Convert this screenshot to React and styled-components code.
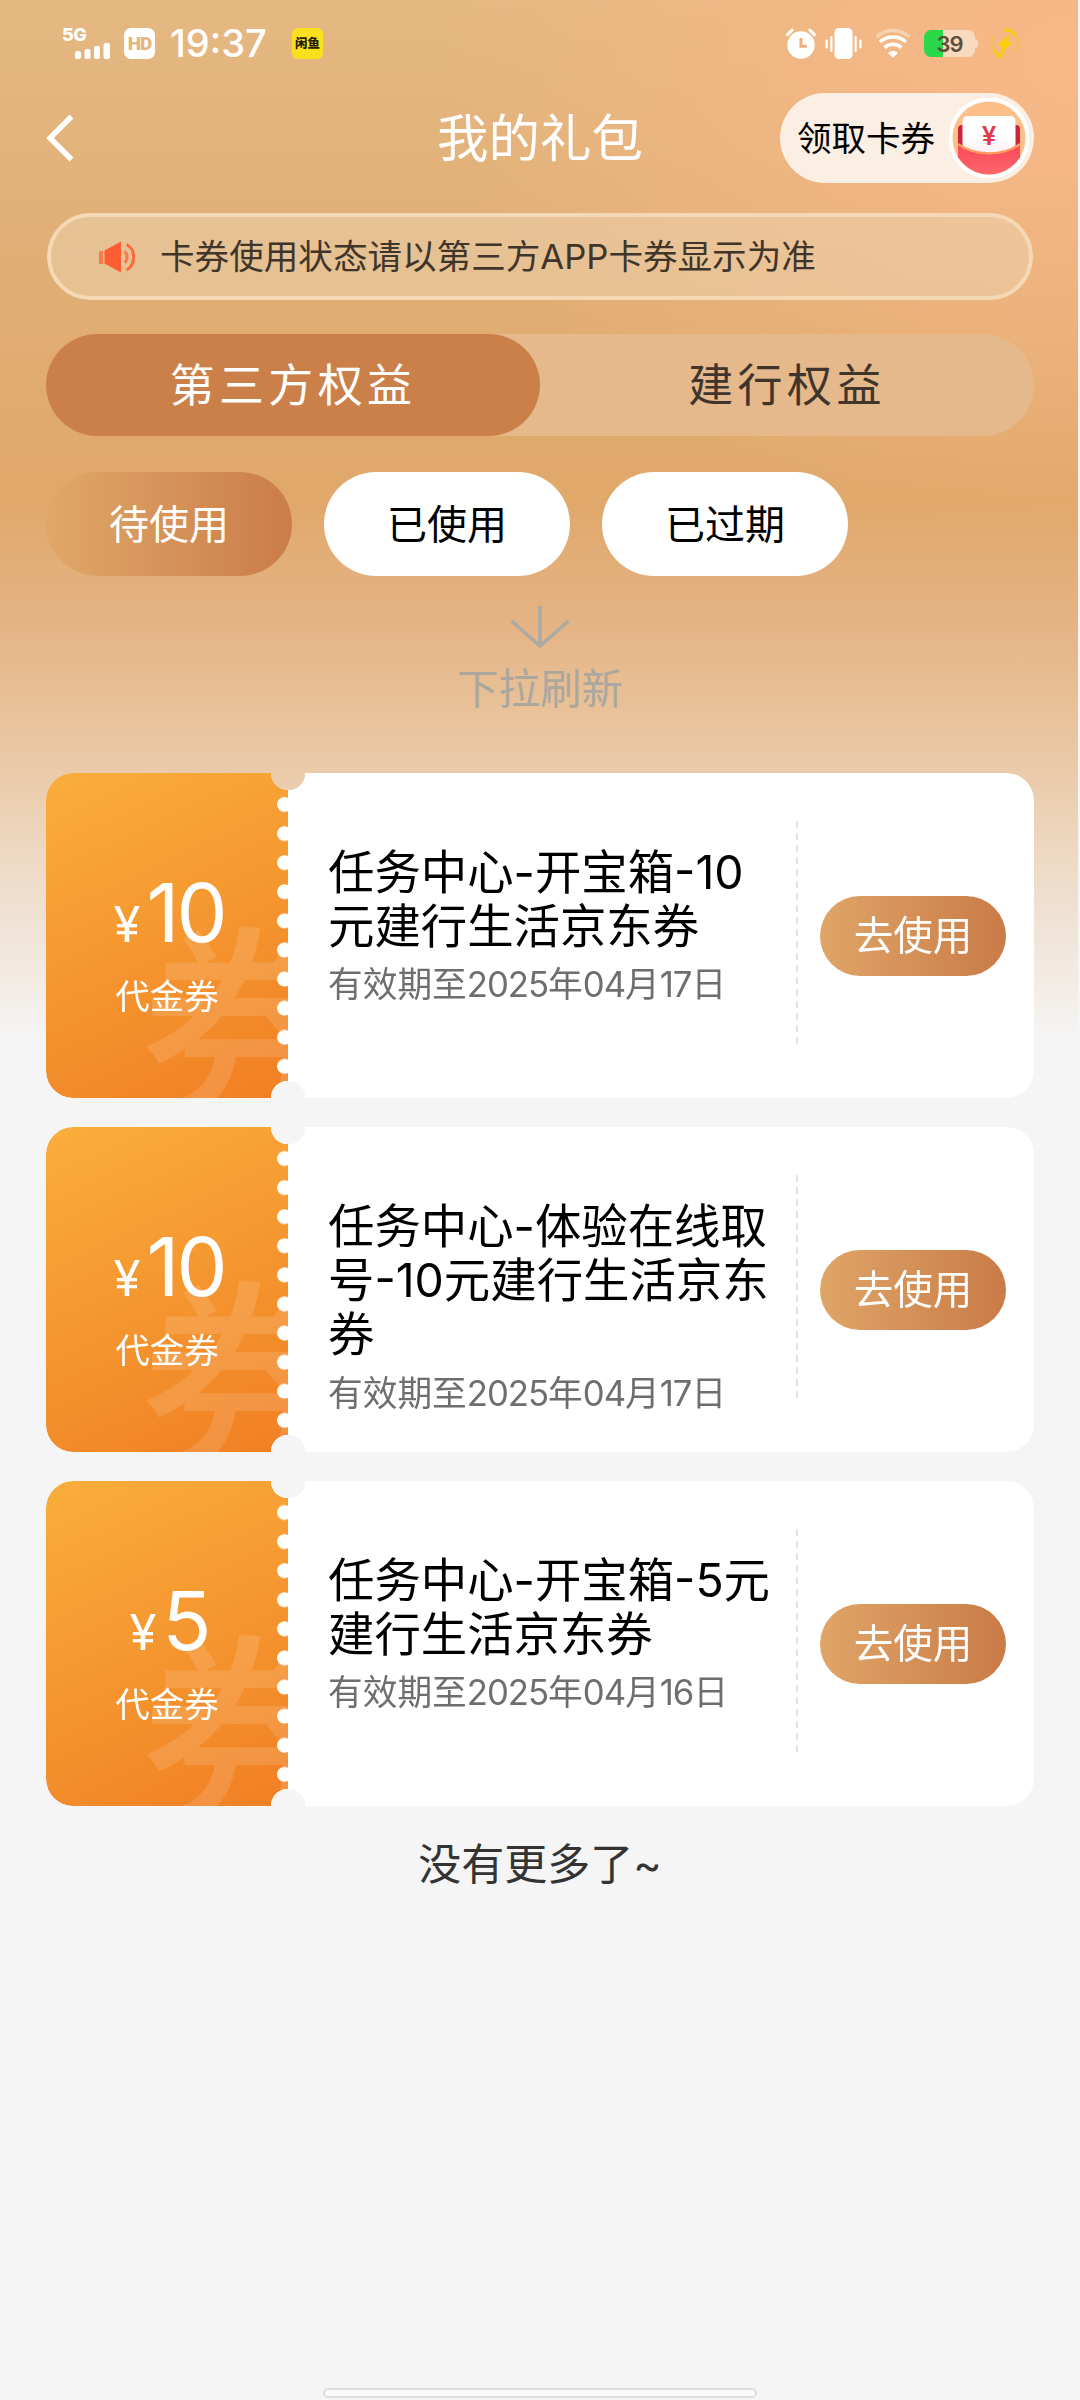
import React, { useState } from 'react';
import styled, { createGlobalStyle } from 'styled-components';

const coupons = [
    { id: 1, amount: 10, title: '任务中心-开宝箱-10元建行生活京东券', date: ['2025', '04', '17'] },
    { id: 2, amount: 10, title: '任务中心-体验在线取号-10元建行生活京东券', date: ['2025', '04', '17'] },
    { id: 3, amount: 5, title: '任务中心-开宝箱-5元建行生活京东券', date: ['2025', '04', '16'] },
];

const tabs = ['第三方权益', '建行权益'];
const filters = ['待使用', '已使用', '已过期'];

const SignalIcon = () => (
    <svg width="35" height="16" viewBox="0 0 35 16" fill="#fff">
        <rect x="0" y="8" width="6" height="8" rx="2" />
        <rect x="9.5" y="6" width="6" height="10" rx="2" />
        <rect x="19" y="3" width="6" height="13" rx="2" />
        <rect x="28.5" y="0" width="6.5" height="16" rx="2" />
    </svg>
);

const AlarmIcon = () => (
    <svg width="30" height="31" viewBox="0 0 30 31" fill="none">
        <circle cx="15" cy="17" r="13.7" fill="#fff" />
        <path d="M1.6 6.6L6.2 2M28.4 6.6L23.8 2" stroke="#fff" strokeWidth="3" strokeLinecap="round" />
        <path d="M15 10v8.3h6" stroke="#ecb07a" strokeWidth="3" />
    </svg>
);

const VibrateIcon = () => (
    <svg width="37" height="31" viewBox="0 0 37 31" fill="#fff">
        <rect x="9.5" y="0" width="18" height="31" rx="4.5" />
        <rect x="5.3" y="8" width="2.2" height="16" rx="1" />
        <rect x="0.4" y="11.5" width="2.4" height="9" rx="1.2" />
        <rect x="29.5" y="8" width="2.2" height="16" rx="1" />
        <rect x="34.2" y="11.5" width="2.4" height="9" rx="1.2" />
    </svg>
);

const WifiIcon = () => (
    <svg width="36" height="30" viewBox="0 0 36 30" fill="none" strokeWidth="3.6">
        <path d="M1.5 9C11 0.2 25 0.2 34.5 9" stroke="rgba(255,255,255,.35)" />
        <path d="M5 14c7.4 -6.6 18.6 -6.6 26 0" stroke="#fff" />
        <path d="M9.5 19.6c5 -4.4 12 -4.4 17 0" stroke="#fff" />
        <path d="M13 25c3 -2.6 7 -2.6 10 0L18 29.8z" fill="#fff" />
    </svg>
);

const ChargeIcon = () => (
    <svg width="30" height="31" viewBox="0 0 30 31" fill="none">
        <path d="M6 24A13 13 0 0 1 4 8" stroke="#f3bf3d" strokeWidth="3" opacity=".6" />
        <path d="M25 7a13 13 0 0 1 0 17" stroke="#f3bf3d" strokeWidth="3" opacity=".6" />
        <path d="M14 2.5c4 -1.5 9 .5 11.5 5M4 22l6 7 4-5" stroke="#f8cb14" strokeWidth="3.4" />
        <path d="M18.5 8L8.500 17h4.500L11.500 24 21.500 14.500h-4.500z" fill="#fbd00b" stroke="#fbd00b" strokeWidth="1.500" strokeLinejoin="round" />
    </svg>
);

const BackIcon = () => (
    <svg width="28" height="48" viewBox="0 0 28 48" fill="none">
        <path d="M25.5 2.5L4 24l21.5 21.5" stroke="#fff" strokeWidth="5.4" />
    </svg>
);

const PacketIcon = () => (
    <svg width="80" height="80" viewBox="0 0 80 80">
        <defs>
            <linearGradient id="packet" x1="0" y1="0" x2="0" y2="1">
                <stop offset="0" stopColor="#f9475a" />
                <stop offset="1" stopColor="#ff6a6c" />
            </linearGradient>
            <linearGradient id="paper" x1="0" y1="0" x2="0" y2="1">
                <stop offset="0.5" stopColor="#fff" />
                <stop offset="1" stopColor="#fde9f0" />
            </linearGradient>
            <clipPath id="disc"><circle cx="40" cy="40" r="36.5" /></clipPath>
        </defs>
        <circle cx="40" cy="40" r="38.5" fill="#fdc08a" stroke="#fff" strokeWidth="4" />
        <g clipPath="url(#disc)">
            <rect x="9" y="27" width="62" height="30" rx="4" fill="#cf2438" />
            <rect x="13.5" y="18" width="53" height="42" rx="5" fill="url(#paper)" />
            <path d="M9 46C26 58.5 54 58.5 71 46V80H9z" fill="url(#packet)" />
            <path d="M9 46C26 58.5 54 58.5 71 46" fill="none" stroke="#ff9a5c" strokeWidth="2.2" />
        </g>
        <text x="40" y="46.5" textAnchor="middle" fontSize="26" fontWeight="600" fontFamily="Inter, sans-serif" fill="#e23a4b">¥</text>
    </svg>
);

const SpeakerIcon = () => (
    <svg width="37" height="32" viewBox="0 0 37 32" fill="none">
        <path d="M0 10h4v13H0z" fill="#fb7a4d" />
        <path d="M5.5 9.5L22 .5v31L5.5 22.5z" fill="#fd5d33" />
        <path d="M25.5 10.5c3.4 2.5 3.4 8.5 0 11" stroke="#fb7a4d" strokeWidth="3" />
        <path d="M27.5 3.5c9.5 4.5 9.5 20.5 0 25.5" stroke="#fd6a3d" strokeWidth="3" />
    </svg>
);

const DownArrow = () => (
    <svg width="60" height="43" viewBox="0 0 60 43" fill="none" stroke="#aeaaa3" strokeWidth="3.6">
        <path d="M30 0v40M1.5 15L30 40 58.5 15" />
    </svg>
);

const App = () => {
    const [tab, setTab] = useState(0);
    const [filter, setFilter] = useState(0);

    return (
        <Page>
            <GlobalStyle />
            <StatusBar>
                <Network>
                    <NetworkType>5G</NetworkType>
                    <SignalIcon />
                </Network>
                <HdBadge>HD</HdBadge>
                <Clock>19:37</Clock>
                <AppBadge>闲鱼</AppBadge>
                <StatusRight>
                    <AlarmIcon />
                    <VibrateIcon />
                    <WifiIcon />
                    <Battery><BatteryLevel>39</BatteryLevel></Battery>
                    <ChargeIcon />
                </StatusRight>
            </StatusBar>

            <Header>
                <BackButton><BackIcon /></BackButton>
                <HeaderTitle>我的礼包</HeaderTitle>
                <ClaimButton>
                    <ClaimText>领取卡券</ClaimText>
                    <PacketIcon />
                </ClaimButton>
            </Header>

            <Notice>
                <SpeakerIcon />
                <NoticeText>卡券使用状态请以第三方APP卡券显示为准</NoticeText>
            </Notice>

            <Tabs>
                {tabs.map((name, i) => (
                    <Tab key={name} $active={tab === i} onClick={() => setTab(i)}>{name}</Tab>
                ))}
            </Tabs>

            <Filters>
                {filters.map((name, i) => (
                    <Filter key={name} $active={filter === i} onClick={() => setFilter(i)}>{name}</Filter>
                ))}
            </Filters>

            <PullRefresh>
                <DownArrow />
                <PullText>下拉刷新</PullText>
            </PullRefresh>

            <CouponList>
                {coupons.map(({ id, amount, title, date }) => (
                    <Coupon key={id}>
                        <CouponValue>
                            <Watermark>券</Watermark>
                            <Amount><Currency>¥</Currency>{amount}</Amount>
                            <CouponType>代金券</CouponType>
                        </CouponValue>
                        <CouponInfo>
                            <CouponTitle>{title}</CouponTitle>
                            <CouponDate>
                                有效期至<Num>{date[0]}</Num>年<Num>{date[1]}</Num>月<Num>{date[2]}</Num>日
                            </CouponDate>
                        </CouponInfo>
                        <CouponAction>
                            <UseButton>去使用</UseButton>
                        </CouponAction>
                    </Coupon>
                ))}
            </CouponList>

            <NoMore>没有更多了~</NoMore>
            <HomeBar />
        </Page>
    );
};

export default App;

const GlobalStyle = createGlobalStyle`
    * {
        box-sizing: border-box;
    }

    body {
        margin: 0;
        background-color: #f5f5f5;
        font-family: Inter, "Noto Sans CJK SC", sans-serif;
    }

    svg {
        display: block;
        flex-shrink: 0;
    }

    button {
        border: none;
        padding: 0;
        font-family: inherit;
        cursor: pointer;
    }
`;

const Page = styled.div`
    width: 1080px;
    height: 2400px;
    display: flex;
    flex-direction: column;
    overflow: hidden;
    background:
        radial-gradient(ellipse 640px 480px at 1080px 60px, #f9b888 0%, rgba(249, 184, 136, .65) 35%, rgba(249, 184, 136, 0) 100%),
        linear-gradient(to bottom, #e5b882 0, #e1b078 220px, #e0a869 500px, #e2ae78 560px, #e4b384 620px, #e8c096 700px, #eacbaa 775px, #eed8c2 850px, #f0e2d5 920px, #f3ece5 985px, #f5f5f5 1040px);
    background-size: 1078px 100%;
    background-repeat: no-repeat;
`;

const StatusBar = styled.div`
    height: 88px;
    padding: 0 60px 2px 62px;
    display: flex;
    align-items: center;
    color: white;
`;

const Network = styled.div`
    width: 48px;
    height: 31px;
    display: flex;
    flex-direction: column;
    align-items: flex-end;
    justify-content: space-between;
`;

const NetworkType = styled.span`
    align-self: flex-start;
    height: 14px;
    font-size: 18px;
    font-weight: 800;
    line-height: 14px;
    letter-spacing: -0.5px;
`;

const HdBadge = styled.span`
    width: 31px;
    height: 31px;
    margin-left: 14px;
    border-radius: 7px;
    background-color: white;
    color: #e4b680;
    font-family: Roboto, sans-serif;
    font-size: 19px;
    font-weight: 900;
    line-height: 32px;
    text-align: center;
    letter-spacing: -1px;
`;

const Clock = styled.span`
    width: 104px;
    margin-left: 15px;
    font-size: 38px;
    font-weight: 500;
    white-space: nowrap;
`;

const AppBadge = styled.span`
    width: 31px;
    height: 31px;
    margin-left: 18px;
    border-radius: 6px;
    background-color: #fbe11d;
    color: #26220a;
    font-size: 12.5px;
    font-weight: 900;
    line-height: 31px;
    text-align: center;
`;

const StatusRight = styled.div`
    margin-left: auto;
    display: flex;
    align-items: center;
    gap: 13px;

    & > svg:first-child {
        margin-right: -4px;
    }
`;

const Battery = styled.div`
    position: relative;
    width: 51px;
    height: 27px;
    margin-right: 2px;
    border-radius: 7px;
    background: linear-gradient(to right, #2bd84a 19px, #f8dac0 19px);

    &::after {
        content: '';
        position: absolute;
        right: -3px;
        top: 9px;
        width: 3px;
        height: 9px;
        border-radius: 0 3px 3px 0;
        background-color: #f8dac0;
    }
`;

const BatteryLevel = styled.span`
    display: block;
    color: #5d4c38;
    font-size: 22px;
    font-weight: 600;
    line-height: 28px;
    text-align: center;
    letter-spacing: -1px;
`;

const Header = styled.div`
    height: 100px;
    padding: 0 46px;
    display: grid;
    grid-template-columns: 1fr auto 1fr;
    align-items: center;
`;

const BackButton = styled.button`
    justify-self: start;
    background: none;
`;

const HeaderTitle = styled.h1`
    margin: 0;
    color: white;
    font-size: 51.5px;
    font-weight: 400;
    line-height: 64px;
`;

const ClaimButton = styled.button`
    justify-self: end;
    width: 254px;
    height: 90px;
    padding: 0 5px 0 17px;
    display: flex;
    align-items: center;
    justify-content: space-between;
    border-radius: 45px;
    background-color: #fbefe4;
    color: black;
`;

const ClaimText = styled.span`
    padding-bottom: 4px;
    font-size: 34.5px;
`;

const Notice = styled.div`
    height: 87px;
    margin: 25px 47px 0;
    padding: 0 48px;
    display: flex;
    align-items: center;
    gap: 24px;
    border: 4px solid #f5d8b5;
    border-radius: 44px;
    background-color: rgba(236, 212, 176, .5);
`;

const NoticeText = styled.span`
    padding-bottom: 5px;
    color: #40352a;
    font-size: 34.6px;
    white-space: nowrap;
`;

const Tabs = styled.div`
    height: 102px;
    margin: 34px 46px 0;
    display: flex;
    border-radius: 51px;
    background-color: #e5b98b;
`;

const Tab = styled.button`
    flex: 1;
    padding-bottom: 6px;
    border-radius: 51px;
    background-color: ${(props) => (props.$active ? '#cc8049' : 'transparent')};
    color: ${(props) => (props.$active ? 'white' : '#40352c')};
    font-size: 45px;
    letter-spacing: 4.4px;
`;

const Filters = styled.div`
    margin: 36px 46px 0;
    display: flex;
    gap: 32px;
`;

const Filter = styled.button`
    width: 246px;
    height: 104px;
    padding-bottom: 5px;
    border-radius: 52px;
    background: ${(props) => (props.$active ? 'linear-gradient(to right, #e0a868, #cb7c49)' : 'white')};
    color: ${(props) => (props.$active ? 'white' : 'black')};
    font-size: 40px;
`;

const PullRefresh = styled.div`
    margin-top: 30px;
    display: flex;
    flex-direction: column;
    align-items: center;
    gap: 19px;
`;

const PullText = styled.span`
    color: #aba79f;
    font-size: 41.5px;
    line-height: 42px;
`;

const CouponList = styled.div`
    margin: 63px 46px 0;
    display: flex;
    flex-direction: column;
    gap: 29px;
`;

const Coupon = styled.div`
    height: 325px;
    display: flex;
    border-radius: 27px;
    overflow: hidden;
    background-color: white;
    mask:
        radial-gradient(circle at 242px 0, transparent 17px, #000 17.5px),
        radial-gradient(circle at 242px 100%, transparent 17px, #000 17.5px);
    mask-composite: intersect;
`;

const CouponValue = styled.div`
    position: relative;
    width: 242px;
    padding-top: 98px;
    display: flex;
    flex-direction: column;
    align-items: center;
    overflow: hidden;
    background: linear-gradient(155deg, #f9ae3b, #f17f24);
    color: white;

    /* perforated edge */
    &::after {
        content: '';
        position: absolute;
        top: 17px;
        right: 0;
        width: 11px;
        height: 291px;
        background: radial-gradient(circle at 7.5px 14.5px, white 7px, transparent 7.8px) 0 0 / 11px 29.1px repeat-y;
    }
`;

const Watermark = styled.span`
    position: absolute;
    left: 94px;
    top: 151px;
    color: rgba(255, 255, 255, .13);
    font-size: 210px;
    font-weight: 500;
    line-height: 1;
`;

const Amount = styled.div`
    position: relative;
    height: 84px;
    padding-left: 4px;
    font-size: 81px;
    line-height: 84px;
    letter-spacing: -3px;
`;

const Currency = styled.span`
    margin-right: 9px;
    font-size: 49px;
`;

const CouponType = styled.span`
    position: relative;
    margin-top: 21px;
    font-size: 34.5px;
    line-height: 42px;
`;

const CouponInfo = styled.div`
    width: 496px;
    padding: 72px 0 0 40px;
`;

const CouponTitle = styled.div`
    color: black;
    font-size: 46.4px;
    line-height: 54.2px;
    word-break: break-all;
`;

const CouponDate = styled.div`
    margin-top: 6px;
    color: #6e6e6e;
    font-size: 34.7px;
    line-height: 50px;
    white-space: nowrap;
`;

const Num = styled.span`
    letter-spacing: -1px;
`;

const CouponAction = styled.div`
    flex: 1;
    margin-left: 12px;
    padding-right: 28px;
    display: flex;
    align-items: center;
    justify-content: flex-end;
    background: repeating-linear-gradient(to bottom, #e2e2e2 0, #e2e2e2 7px, transparent 7px, transparent 12px) 0 48px / 2px 226px no-repeat;
`;

const UseButton = styled.button`
    width: 186px;
    height: 80px;
    padding-bottom: 6px;
    border-radius: 40px;
    background: linear-gradient(to right, #dfa567, #ca7b47);
    color: white;
    font-size: 39.5px;
`;

const NoMore = styled.div`
    margin-top: 34px;
    color: #333;
    font-size: 43px;
    line-height: 48px;
    text-align: center;
`;

const HomeBar = styled.div`
    width: 434px;
    height: 10px;
    margin: auto auto 2px;
    border: 2px solid #dedede;
    border-radius: 5px;
    background-color: #fafafa;
`;
